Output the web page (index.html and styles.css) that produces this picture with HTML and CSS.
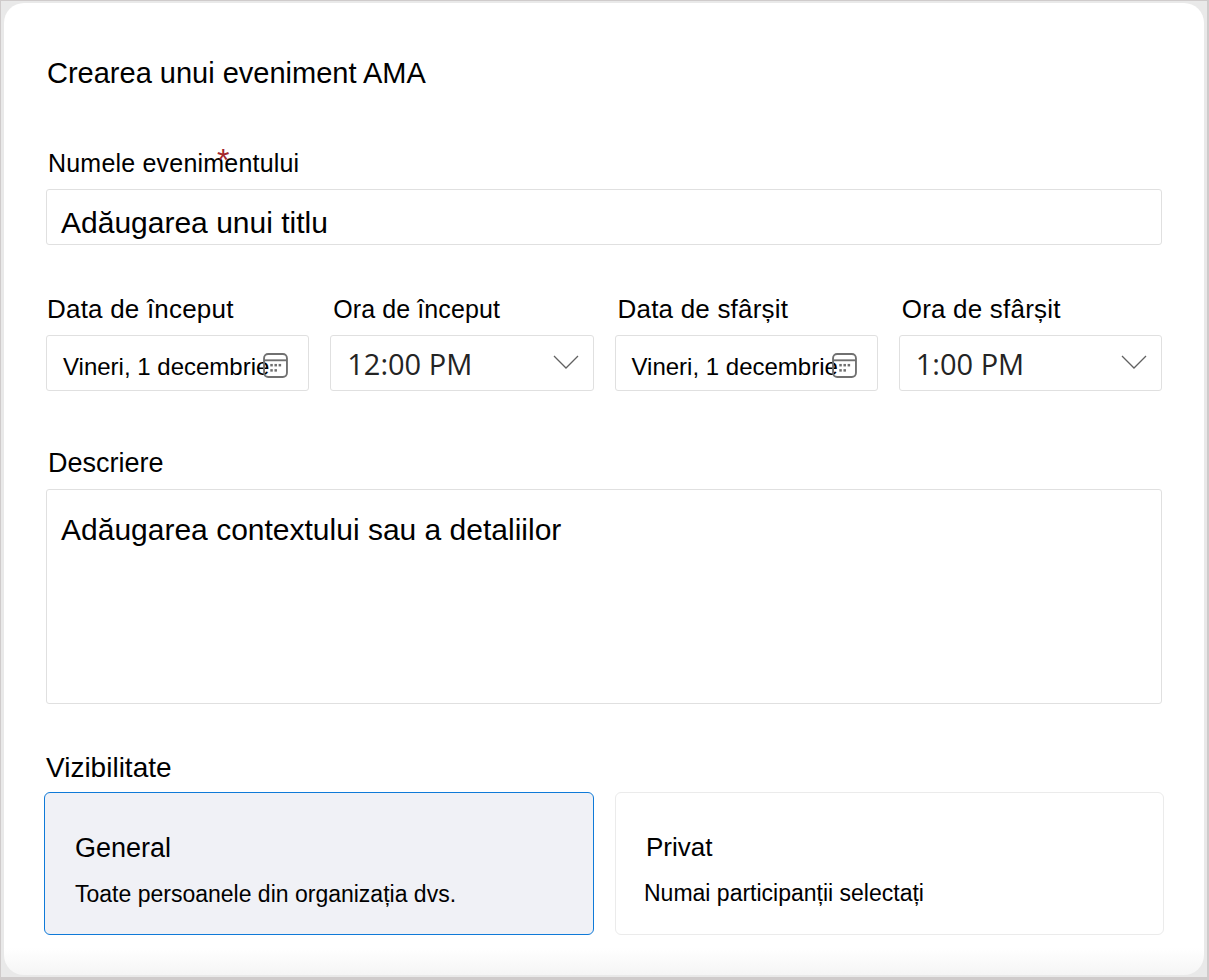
FILE: index.html
```html
<!DOCTYPE html>
<html lang="ro">
<head>
<meta charset="utf-8">
<title>Crearea unui eveniment AMA</title>
<link rel="stylesheet" href="styles.css">
</head>
<body>
<div class="window">
<main class="panel">
  <h1 class="title">Crearea unui eveniment AMA</h1>
  <div class="name-label-row">
    <label class="label label-name">Numele evenimentului</label>
    <span class="required">*</span>
  </div>
  <div class="field field-title"><span class="placeholder">Adăugarea unui titlu</span></div>
  <div class="when">
    <div class="when-col">
      <label class="label label-when label-first">Data de început</label>
      <div class="field field-when">
        <span class="date-text">Vineri, 1 decembrie</span>
        <svg class="cal" viewBox="0 0 24 24" fill="none" stroke="#707070" stroke-width="1.8"><rect x="1" y="1" width="22" height="22" rx="4"/><path d="M1 7h22"/><g fill="#707070" stroke="none"><rect x="7" y="10.5" width="2.4" height="2.4"/><rect x="11" y="10.5" width="2.4" height="2.4"/><rect x="15" y="10.5" width="2.4" height="2.4"/><rect x="7" y="15.5" width="2.4" height="2.4"/><rect x="11" y="15.5" width="2.4" height="2.4"/></g></svg>
      </div>
    </div>
    <div class="when-col">
      <label class="label label-when label-narrow">Ora de început</label>
      <div class="field field-when field-time">
        <span class="time-text">12:00 PM</span>
        <svg class="chev" viewBox="0 0 26 14" fill="none" stroke="#616161" stroke-width="1.3"><path d="M1 1l12 12L25 1"/></svg>
      </div>
    </div>
    <div class="when-col">
      <label class="label label-when">Data de sfârșit</label>
      <div class="field field-when">
        <span class="date-text">Vineri, 1 decembrie</span>
        <svg class="cal" viewBox="0 0 24 24" fill="none" stroke="#707070" stroke-width="1.8"><rect x="1" y="1" width="22" height="22" rx="4"/><path d="M1 7h22"/><g fill="#707070" stroke="none"><rect x="7" y="10.5" width="2.4" height="2.4"/><rect x="11" y="10.5" width="2.4" height="2.4"/><rect x="15" y="10.5" width="2.4" height="2.4"/><rect x="7" y="15.5" width="2.4" height="2.4"/><rect x="11" y="15.5" width="2.4" height="2.4"/></g></svg>
      </div>
    </div>
    <div class="when-col">
      <label class="label label-when">Ora de sfârșit</label>
      <div class="field field-when field-time">
        <span class="time-text">1:00 PM</span>
        <svg class="chev" viewBox="0 0 26 14" fill="none" stroke="#616161" stroke-width="1.3"><path d="M1 1l12 12L25 1"/></svg>
      </div>
    </div>
  </div>
  <label class="label label-desc">Descriere</label>
  <div class="field field-desc"><span class="placeholder">Adăugarea contextului sau a detaliilor</span></div>
  <div class="label label-vis">Vizibilitate</div>
  <div class="cards">
    <div class="card card-on">
      <div class="card-title">General</div>
      <div class="card-text">Toate persoanele din organizația dvs.</div>
    </div>
    <div class="card card-off">
      <div class="card-title">Privat</div>
      <div class="card-text">Numai participanții selectați</div>
    </div>
  </div>
</main>
</div>
</body>
</html>
```
FILE: styles.css
```css
* { box-sizing: border-box; }
html, body { margin: 0; height: 100%; }
body {
  width: 1209px;
  height: 980px;
  overflow: hidden;
  padding: 1px 2px 3px 1px;
  background: #cfcbcb;
  font-family: "Liberation Sans", Arial, sans-serif;
  color: #000;
}
.window {
  height: 976px;
  padding: 2px 3px;
  background: #e9e9e9;
}
.panel {
  width: 1200px;
  height: 972px;
  background: linear-gradient(180deg, #fff 0, #fff 945px, #f5f5f5 972px);
  border-radius: 20px;
  padding: 0 42px;
  position: relative;
}
.title {
  margin: 0;
  padding-top: 54px;
  font-size: 29px;
  font-weight: 400;
  line-height: 32px;
  padding-left: 1px;
}
.name-label-row { position: relative; margin-top: 60px; height: 30px; }
.label { display: block; font-size: 24px; line-height: 30px; }
.label-name { padding-left: 2px; font-size: 25px; letter-spacing: 0.2px; line-height: 28px; }
.required {
  position: absolute;
  left: 171px;
  top: -7px;
  color: #a4262c;
  font-size: 32px;
  line-height: 36px;
}
.field { background: #fff; border: 1px solid #e0e0e0; border-radius: 3px; }
.field-title { height: 56px; margin-top: 10px; padding: 15px 14px 0; }
.placeholder { font-size: 30px; line-height: 36px; display: block; }
.when {
  display: grid;
  grid-template-columns: repeat(4, 1fr);
  column-gap: 21px;
  margin-top: 48px;
}
.label-when { padding-left: 3px; font-size: 26px; letter-spacing: 0.2px; padding-top: 2px; height: 30px; line-height: 29px; }
.label-first { padding-left: 1px; }
.label-narrow { font-size: 25px; letter-spacing: 0.1px; }
.field-when {
  height: 56px;
  margin-top: 12px;
  display: flex;
  align-items: center;
  position: relative;
  padding-left: 16px;
}
.date-text { font-size: 24px; line-height: 30px; white-space: nowrap; padding-top: 8px; }
.cal { position: absolute; left: 216px; top: 17px; width: 25px; height: 25px; }
.field-time { padding-left: 16px; justify-content: space-between; padding-right: 14px; }
.time-text { font-family: "Open Sans", sans-serif; font-size: 29px; color: #242424; }
.chev { width: 26px; height: 14px; margin-top: -2px; }
.label-desc { margin-top: 57px; padding-left: 2px; font-size: 27px; }
.field-desc { height: 215px; margin-top: 11px; padding: 22px 14px 0; }
.label-vis { margin-top: 49px; font-size: 28px; }
.cards {
  display: grid;
  grid-template-columns: 550px 549px;
  column-gap: 21px;
  margin: 9px -2px 0 -2px;
}
.card { height: 143px; border-radius: 6px; padding: 36px 30px 0; }
.card-on { background: #f0f1f6; border: 1px solid #0f7ad8; padding-top: 37px; }
.card-off { background: #fff; border: 1px solid #ebebeb; }
.card-title { font-size: 26px; line-height: 36px; }
.card-on .card-title { font-size: 27px; }
.card-text { font-size: 23px; line-height: 30px; margin-top: 13px; }
.card-off .card-text { margin-left: -2px; }
```
